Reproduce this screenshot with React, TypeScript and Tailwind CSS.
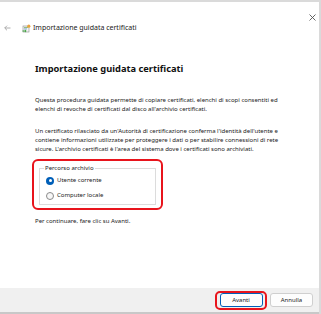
import React from 'react';

const font = { fontFamily: '"Noto Sans", "Liberation Sans", sans-serif' };

// small certificate-wizard glyph shown next to the dialog title
const WizardIcon = () => (
  <svg width="9" height="9" viewBox="0 0 9 9">
    <rect x="1" y="2" width="6" height="6" fill="#f4f4f4" stroke="#8a8a8a" strokeWidth="0.6" />
    <rect x="2" y="3.2" width="4" height="0.7" fill="#6aa84f" />
    <rect x="2" y="4.6" width="3" height="0.7" fill="#4a86c5" />
    <circle cx="6.8" cy="2.2" r="1.6" fill="#e8a33c" />
    <path d="M0.5 6.5 L3 6.5 L3 5.5 L4.6 7 L3 8.5 L3 7.5 L0.5 7.5 Z" fill="#3aa13a" />
  </svg>
);

const Radio = ({ checked, label }: { checked?: boolean; label: string }) => (
  <label className="flex items-center gap-[3px] h-[15px]">
    {checked ? (
      <span className="w-[8px] h-[8px] rounded-full bg-[#005fb8] flex items-center justify-center">
        <span className="w-[3px] h-[3px] rounded-full bg-white" />
      </span>
    ) : (
      <span className="w-[8px] h-[8px] rounded-full border border-[#8a8a8a] bg-[#f7f7f7]" />
    )}
    <span className="text-[6px] text-[#1a1a1a]">{label}</span>
  </label>
);

const App: React.FC = () => {
  return (
    <div
      className="w-[321px] h-[314px] bg-white border-t-2 border-r-2 border-[#dadada] flex flex-col overflow-hidden"
      style={font}
    >
      {/* Title bar */}
      <div className="flex justify-end pr-[3px] pt-[12px] h-[20px]">
        <svg width="7" height="7" viewBox="0 0 7 7">
          <path d="M0.5 0.5 L6.5 6.5 M6.5 0.5 L0.5 6.5" stroke="#555" strokeWidth="0.9" />
        </svg>
      </div>
      <div className="flex items-center h-[12px] pl-[4px]">
        <svg width="7" height="6" viewBox="0 0 7 6" className="mr-[11px]">
          <path d="M6.5 3 H0.8 M3 0.7 L0.7 3 L3 5.3" stroke="#9a9a9a" strokeWidth="0.8" fill="none" />
        </svg>
        <WizardIcon />
        <span className="ml-[2px] text-[7px] text-[#1a1a1a]">Importazione guidata certificati</span>
      </div>

      {/* Body */}
      <div className="flex-1 flex flex-col pl-[35px] pr-[36px]">
        <h1 className="mt-[29px] text-[9.3px] font-bold leading-[12px] text-[#111]">
          Importazione guidata certificati
        </h1>
        <p className="mt-[21px] text-[6px] leading-[9px] text-[#1a1a1a]">
          Questa procedura guidata permette di copiare certificati, elenchi di scopi consentiti ed elenchi di revoche di certificati dal disco all'archivio certificati.
        </p>
        <p className="mt-[13px] text-[6px] leading-[9px] text-[#1a1a1a]">
          Un certificato rilasciato da un'Autorità di certificazione conferma l'identità dell'utente e contiene informazioni utilizzate per proteggere i dati o per stabilire connessioni di rete sicure. L'archivio certificati è l'area del sistema dove i certificati sono archiviati.
        </p>

        <div className="mt-[5px] -ml-[3px] w-[131px] h-[51px] rounded-[6px] border-2 border-[#e8141c] px-[5px] pt-[3px]">
          <fieldset className="border border-[#dcdcdc] px-[6px] pt-[1px] h-[41px]">
            <legend className="text-[6px] leading-[8px] text-[#1a1a1a] px-[1px] -ml-[2px]">Percorso archivio</legend>
            <Radio checked label="Utente corrente" />
            <Radio label="Computer locale" />
          </fieldset>
        </div>

        <p className="mt-[7px] text-[6px] leading-[9px] text-[#1a1a1a]">Per continuare, fare clic su Avanti.</p>
      </div>

      {/* Footer */}
      <div className="h-[24px] bg-[#f0f0f0] flex items-center justify-end gap-[3px] pr-[6px]">
        <div className="w-[52px] h-[19px] rounded-[5px] border-2 border-[#e8141c] flex items-center justify-center">
          <button className="w-[43px] h-[14px] rounded-[3px] border border-[#005fb8] bg-[#fdfdfd] text-[6px] leading-none text-[#1a1a1a]">
            Avanti
          </button>
        </div>
        <button className="w-[43px] h-[14px] rounded-[3px] border border-[#cfcfcf] bg-[#fdfdfd] text-[6px] leading-none text-[#1a1a1a]">
          Annulla
        </button>
      </div>
      <div className="h-[2px] bg-[#c8c8c8]" />
    </div>
  );
};

export default App;
